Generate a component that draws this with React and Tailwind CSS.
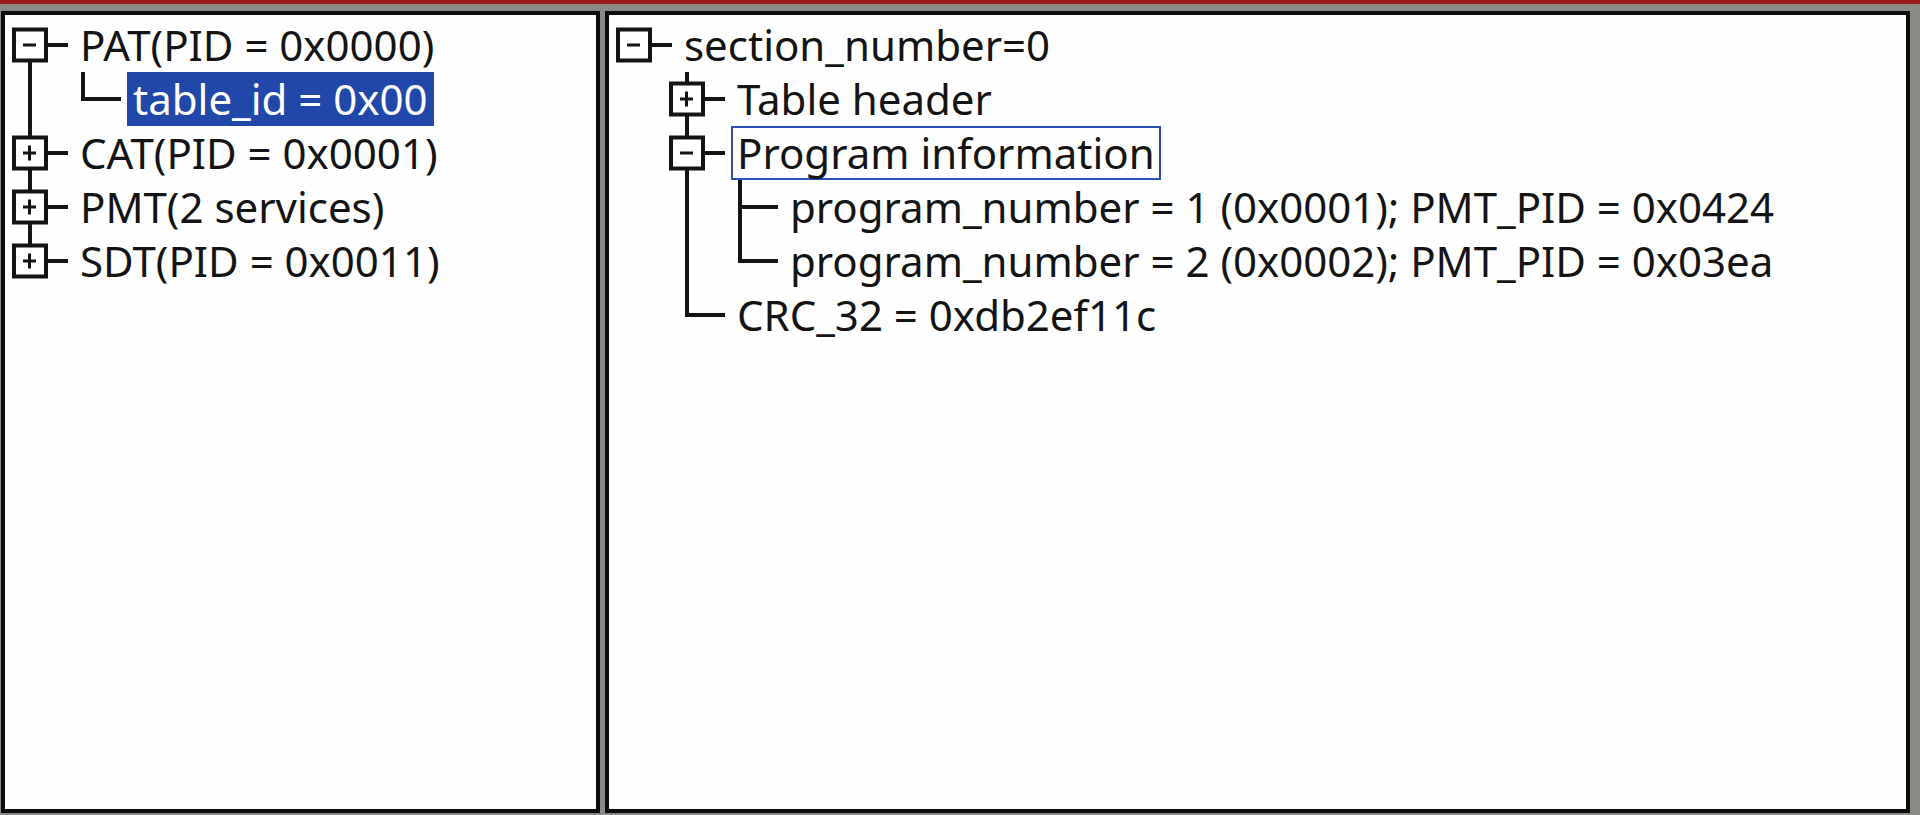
import React from "react";

const ROW = 54;
const TOP = 3;
const cy = (i) => 30 + ROW * i;
const bx = (L) => 25 + 53 * L;
const SW = 4;
const INK = "#141414";

function Box({ L, i, open }) {
  const x = bx(L);
  const y = cy(i);
  return (
    <g>
      <line x1={x + 18} y1={y} x2={x + 38} y2={y} stroke={INK} strokeWidth={SW} />
      <rect x={x - 16} y={y - 15.5} width={32} height={31} fill="#ffffff" stroke={INK} strokeWidth={SW} />
      <line x1={x - 7} y1={y} x2={x + 6} y2={y} stroke={INK} strokeWidth={3} />
      {!open && <line x1={x - 0.5} y1={y - 7.5} x2={x - 0.5} y2={y + 7.5} stroke={INK} strokeWidth={3} />}
    </g>
  );
}

function Leaf({ L, i }) {
  const x = bx(L);
  const y = cy(i);
  return <line x1={x - 2} y1={y} x2={x + 38} y2={y} stroke={INK} strokeWidth={SW} />;
}

function VLine({ L, y1, y2 }) {
  const x = bx(L);
  return <line x1={x} y1={y1} x2={x} y2={y2 + 2} stroke={INK} strokeWidth={SW} />;
}

function Row({ L, text, selected, focused }) {
  const pad = 69 + 53 * L;
  return (
    <div className="h-[54px] flex" style={{ paddingLeft: pad }}>
      {selected ? (
        <span className="h-[54px] leading-[54px] pl-[6px] pr-[6px] bg-[#2148a8] text-white whitespace-nowrap">{text}</span>
      ) : focused ? (
        <span className="h-[54px] leading-[50px] pl-[4px] pr-[4px] border-2 border-[#2c4fb4] whitespace-nowrap">{text}</span>
      ) : (
        <span className="h-[54px] leading-[54px] pl-[6px] pr-[6px] whitespace-nowrap">{text}</span>
      )}
    </div>
  );
}

function LeftTree() {
  return (
    <div className="relative w-full h-full">
      <svg className="absolute inset-0 pointer-events-none" width="100%" height="100%">
        <VLine L={0} y1={cy(0)} y2={cy(4)} />
        <VLine L={1} y1={57} y2={cy(1)} />
        <Leaf L={1} i={1} />
        <Box L={0} i={0} open />
        <Box L={0} i={2} />
        <Box L={0} i={3} />
        <Box L={0} i={4} />
      </svg>
      <div className="relative flex flex-col" style={{ paddingTop: TOP }}>
        <Row L={0} text="PAT(PID = 0x0000)" />
        <Row L={1} text="table_id = 0x00" selected />
        <Row L={0} text="CAT(PID = 0x0001)" />
        <Row L={0} text="PMT(2 services)" />
        <Row L={0} text="SDT(PID = 0x0011)" />
      </div>
    </div>
  );
}

function RightTree() {
  return (
    <div className="relative w-full h-full">
      <svg className="absolute inset-0 pointer-events-none" width="100%" height="100%">
        <VLine L={1} y1={57} y2={cy(5)} />
        <line x1={bx(1)} y1={cy(5)} x2={bx(1) + 38} y2={cy(5)} stroke={INK} strokeWidth={SW} />
        <VLine L={2} y1={165} y2={cy(4)} />
        <Leaf L={2} i={3} />
        <Leaf L={2} i={4} />
        <Box L={0} i={0} open />
        <Box L={1} i={1} />
        <Box L={1} i={2} open />
      </svg>
      <div className="relative flex flex-col" style={{ paddingTop: TOP }}>
        <Row L={0} text="section_number=0" />
        <Row L={1} text="Table header" />
        <Row L={1} text="Program information" focused />
        <Row L={2} text="program_number = 1 (0x0001); PMT_PID = 0x0424" />
        <Row L={2} text="program_number = 2 (0x0002); PMT_PID = 0x03ea" />
        <Row L={1} text="CRC_32 = 0xdb2ef11c" />
      </div>
    </div>
  );
}

export default function App() {
  return (
    <div
      className="w-[1920px] h-[815px] bg-[#8a8a86] flex flex-col overflow-hidden text-[42px] text-[#141414]"
      style={{ fontFamily: '"Noto Sans", "Open Sans", sans-serif' }}
    >
      <div className="h-[4px] bg-[#9c1c1c] shrink-0" />
      <div className="flex-1 flex gap-[5px] pt-[7px] pb-[2px] pl-[1px] pr-[10px] min-h-0">
        <div className="w-[599px] shrink-0 border-4 border-[#0c0c0c] bg-[#fefefe] overflow-hidden">
          <LeftTree />
        </div>
        <div className="flex-1 border-4 border-[#0c0c0c] bg-[#fefefe] overflow-hidden">
          <RightTree />
        </div>
      </div>
    </div>
  );
}
